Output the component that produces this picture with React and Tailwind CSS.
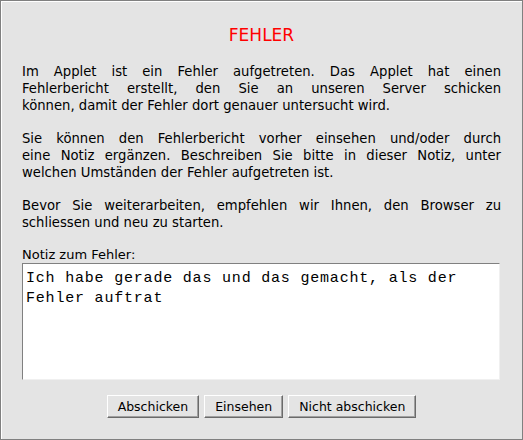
import React from 'react'

const dialogFont = { fontFamily: '"DejaVu Sans", Verdana, sans-serif' }

// one line of a justified paragraph; all lines but the last are stretched
function Line({ children, last }) {
  return (
    <div className={last ? 'text-left' : 'text-justify [text-align-last:justify]'}>
      {children}
    </div>
  )
}

function Paragraph({ lines, className = '' }) {
  return (
    <div className={`text-[13.2px] leading-[17px] text-black ${className}`}>
      {lines.map((line, i) => (
        <Line key={i} last={i === lines.length - 1}>{line}</Line>
      ))}
    </div>
  )
}

function Button({ children }) {
  return (
    <button className="h-[23px] px-[10px] text-[12.5px] leading-[15px] text-black bg-[#e4e4e4] border border-t-white border-l-white border-r-[#6a6a6a] border-b-[#6a6a6a] shadow-[inset_-1px_-1px_0_#a0a0a0]">
      {children}
    </button>
  )
}

export default function App() {
  return (
    <div
      className="w-[523px] h-[440px] bg-[#e4e4e4] border border-[#808080] shadow-[inset_1px_1px_0_#ffffff] px-[21px] flex flex-col"
      style={dialogFont}
    >
      <div className="mt-[24px] text-center text-[17px] leading-[20px] text-[#ff0000]">FEHLER</div>

      <Paragraph
        className="mt-[18px]"
        lines={[
          'Im Applet ist ein Fehler aufgetreten. Das Applet hat einen',
          'Fehlerbericht erstellt, den Sie an unseren Server schicken',
          'können, damit der Fehler dort genauer untersucht wird.',
        ]}
      />
      <Paragraph
        className="mt-[16px]"
        lines={[
          'Sie können den Fehlerbericht vorher einsehen und/oder durch',
          'eine Notiz ergänzen. Beschreiben Sie bitte in dieser Notiz, unter',
          'welchen Umständen der Fehler aufgetreten ist.',
        ]}
      />
      <Paragraph
        className="mt-[16px]"
        lines={[
          'Bevor Sie weiterarbeiten, empfehlen wir Ihnen, den Browser zu',
          'schliessen und neu zu starten.',
        ]}
      />

      <div className="mt-[15px] text-[13px] leading-[17px] text-black">Notiz zum Fehler:</div>

      {/* note field */}
      <div
        className="w-[478px] h-[117px] bg-white border border-t-[#808080] border-l-[#808080] border-r-[#f0f0f0] border-b-[#f0f0f0] px-[3px] pt-[5px] text-[15px] leading-[20px] tracking-[0.8px] text-black"
        style={{ fontFamily: '"Liberation Mono", "Courier New", monospace' }}
      >
        <div>Ich habe gerade das und das gemacht, als der</div>
        <div>Fehler auftrat</div>
      </div>

      <div className="mt-[15px] flex justify-center gap-[5px]">
        <Button>Abschicken</Button>
        <Button>Einsehen</Button>
        <Button>Nicht abschicken</Button>
      </div>
    </div>
  )
}
